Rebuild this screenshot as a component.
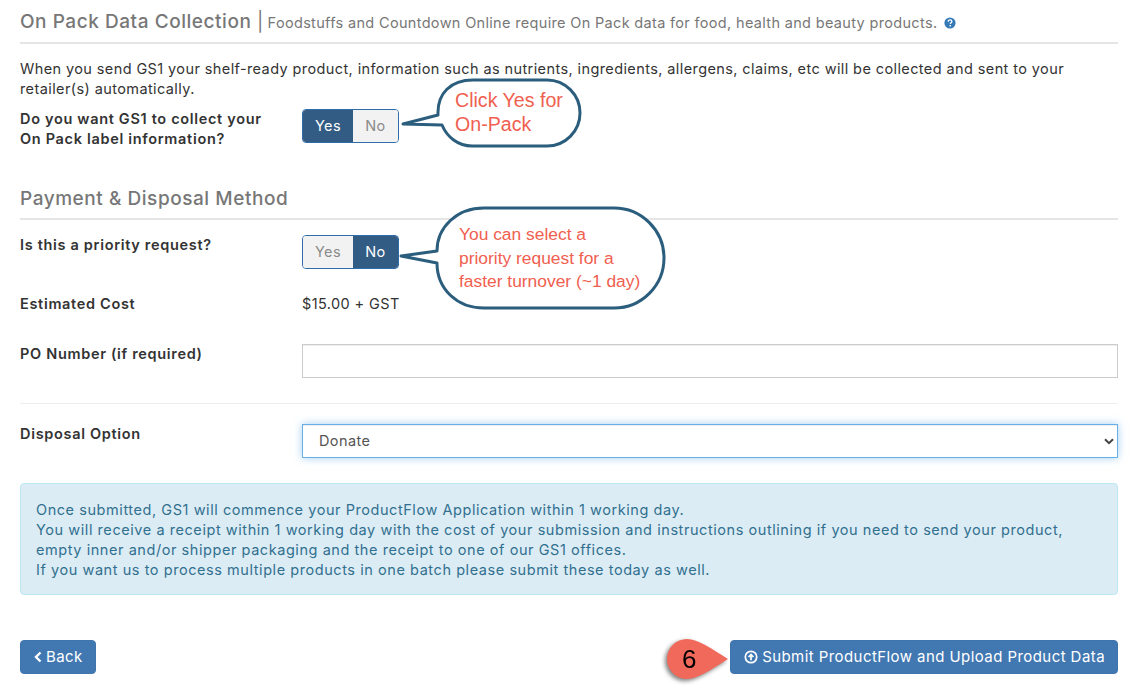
<script>
	let onPack = 'yes';
	let priority = 'no';
</script>

<div class="page">
	<h4 class="heading first">
		On Pack Data Collection <span class="sep">|</span>
		<small>Foodstuffs and Countdown Online require On Pack data for food, health and beauty products.</small>
		<svg class="help" viewBox="0 0 12 12" width="12" height="12">
			<circle cx="6" cy="6" r="5.6" fill="#337ab7" />
			<path d="M4.2 4.7c0-1.1.8-1.8 1.9-1.8s1.8.7 1.8 1.6c0 1.3-1.6 1.3-1.6 2.5" fill="none" stroke="#fff" stroke-width="1.3" />
			<rect x="5.5" y="8" width="1.5" height="1.4" fill="#fff" />
		</svg>
	</h4>

	<p class="intro">
		When you send GS1 your shelf-ready product, information such as nutrients, ingredients, allergens, claims, etc will be collected and sent to your retailer(s) automatically.
	</p>

	<div class="row onpack">
		<label class="label" for="onpack">Do you want GS1 to collect your<br />On Pack label information?</label>
		<div class="toggle" id="onpack">
			<button class="yes" class:on={onPack === 'yes'}>Yes</button>
			<button class="no" class:on={onPack === 'no'}>No</button>
		</div>
	</div>

	<h4 class="heading second">Payment &amp; Disposal Method</h4>

	<div class="row priority">
		<label class="label" for="priority">Is this a priority request?</label>
		<div class="toggle" id="priority">
			<button class="yes" class:on={priority === 'yes'}>Yes</button>
			<button class="no" class:on={priority === 'no'}>No</button>
		</div>
	</div>

	<div class="row cost">
		<span class="label">Estimated Cost</span>
		<span class="value">$15.00 + GST</span>
	</div>

	<div class="row po">
		<label class="label" for="po">PO Number (if required)</label>
		<input id="po" type="text" />
	</div>

	<hr />

	<div class="row disposal">
		<label class="label" for="disposal">Disposal Option</label>
		<div class="select-wrap">
			<select id="disposal">
				<option>Donate</option>
			</select>
			<svg class="chevron" viewBox="0 0 10 7" width="10" height="7">
				<path d="M1 1.2l4 4 4-4" fill="none" stroke="#444" stroke-width="2" />
			</svg>
		</div>
	</div>

	<div class="alert">
		Once submitted, GS1 will commence your ProductFlow Application within 1 working day.<br />
		You will receive a receipt within 1 working day with the cost of your submission and instructions outlining if you need to send your product, empty inner and/or shipper packaging and the receipt to one of our GS1 offices.<br />
		If you want us to process multiple products in one batch please submit these today as well.
	</div>

	<div class="actions">
		<button class="btn">
			<svg viewBox="0 0 8 12" width="8" height="12">
				<path d="M6.5 1.5L2 6l4.5 4.5" fill="none" stroke="#fff" stroke-width="2.4" />
			</svg>
			Back
		</button>
		<button class="btn">
			<svg viewBox="0 0 14 14" width="14" height="14">
				<circle cx="7" cy="7" r="5.7" fill="none" stroke="#fff" stroke-width="1.7" />
				<path d="M7 10.2V4.6M4.6 7L7 4.4 9.4 7" fill="none" stroke="#fff" stroke-width="1.7" />
			</svg>
			Submit ProductFlow and Upload Product Data
		</button>
	</div>

	<!-- annotations drawn on top of the screenshot -->
	<div class="callout one">
		<svg viewBox="0 0 184 72" width="184" height="72">
			<path d="M37 38C36 16 50 3 72 3H146a33 33 0 0 1 0 66H71C57 69 46 60 41 48L2 47Z" fill="#fff" stroke="#2b5d7d" stroke-width="3" stroke-linejoin="round" />
		</svg>
		<span>Click Yes for<br />On-Pack</span>
	</div>

	<div class="callout two">
		<svg viewBox="0 0 268 106" width="268" height="106">
			<path d="M85 3H215a50 50 0 0 1 0 100H85C58 103 38 84 38 58L2 51 38 46C38 22 58 3 85 3Z" fill="#fff" stroke="#2b5d7d" stroke-width="3" stroke-linejoin="round" />
		</svg>
		<span>You can select a<br />priority request for a<br />faster turnover (~1 day)</span>
	</div>

	<div class="marker">
		<svg viewBox="0 0 72 48" width="72" height="48">
			<path d="M25 2C36 2 50 12 66 22 50 32 36 42 25 42A20 20 0 0 1 25 2Z" fill="#f0695a" />
		</svg>
		<span>6</span>
	</div>
</div>

<style>
	:global(body) {
		margin: 0;
		background: #fff;
	}

	.page {
		position: relative;
		height: 690px;
		overflow: hidden;
		padding: 0 17px 0 20px;
		box-sizing: border-box;
		font-family: Inter, sans-serif;
		font-size: 14.5px;
		letter-spacing: 0.4px;
		line-height: 20px;
		color: #333;
	}

	.heading {
		margin: 0;
		font-size: 19px;
		font-weight: 500;
		letter-spacing: 0.55px;
		line-height: 22px;
		color: #777;
		border-bottom: 2px solid #e5e5e5;
	}

	.heading.first {
		padding: 11px 0 8px;
	}

	.heading.second {
		margin-top: 39px;
		padding-bottom: 8px;
	}

	.sep {
		font-weight: 400;
	}

	small {
		margin-left: -2px;
		font-size: 14.5px;
		font-weight: 400;
		letter-spacing: 0.33px;
		color: #777;
	}

	.help {
		margin-left: 1px;
		vertical-align: -1px;
	}

	.intro {
		margin: 15px 0 0;
	}

	.row {
		display: grid;
		grid-template-columns: 282px 1fr;
		align-items: start;
	}

	.label {
		font-weight: 600;
		letter-spacing: 0.68px;
	}

	.onpack {
		margin-top: 10px;
	}

	.priority {
		margin-top: 15px;
	}

	.cost {
		margin-top: 25px;
	}

	.po {
		margin-top: 30px;
	}

	.disposal {
		margin-top: 20px;
	}

	.toggle {
		display: flex;
		width: 97px;
		height: 34px;
		box-sizing: border-box;
		border: 1px solid #2f6da8;
		border-radius: 4px;
		overflow: hidden;
	}

	.toggle button {
		border: 0;
		padding: 0;
		font: inherit;
		letter-spacing: inherit;
		background: #f2f2f2;
		color: #8a8a8a;
	}

	.toggle button.on {
		background: #335c85;
		color: #fff;
	}

	.toggle .yes {
		width: 50px;
	}

	.toggle .no {
		flex: 1;
	}

	input {
		height: 34px;
		width: 100%;
		box-sizing: border-box;
		border: 1px solid #ccc;
		background: #fff;
		outline: none;
		box-shadow: inset 0 1px 1px rgba(0, 0, 0, 0.075);
	}

	hr {
		margin: 25px 0 0;
		border: 0;
		border-top: 1px solid #eee;
	}

	.select-wrap {
		position: relative;
	}

	select {
		display: block;
		width: 100%;
		height: 34px;
		box-sizing: border-box;
		padding: 0 16px;
		appearance: none;
		border: 1px solid #66afe9;
		border-radius: 0;
		background: #fff;
		font: inherit;
		letter-spacing: inherit;
		color: #555;
		box-shadow:
			inset 0 1px 1px rgba(0, 0, 0, 0.075),
			0 0 8px rgba(102, 175, 233, 0.6);
	}

	.chevron {
		position: absolute;
		right: 4px;
		top: 14px;
	}

	.alert {
		margin-top: 25px;
		padding: 16px 15px 14px;
		border: 1px solid #bce8f1;
		border-radius: 4px;
		background: #dcecf5;
		color: #31708f;
		letter-spacing: 0.56px;
	}

	.actions {
		display: flex;
		justify-content: space-between;
		margin-top: 45px;
	}

	.btn {
		display: flex;
		align-items: center;
		gap: 4px;
		height: 34px;
		padding: 0 12px 0 13px;
		border: 1px solid #3f74ad;
		border-radius: 4px;
		background: #4278b2;
		color: #fff;
		font: inherit;
		font-size: 15px;
		letter-spacing: 0.43px;
	}

	.callout,
	.marker {
		position: absolute;
	}

	.callout svg,
	.marker svg {
		display: block;
	}

	.callout span {
		position: absolute;
		font-family: 'Liberation Sans', sans-serif;
		letter-spacing: 0;
		color: #f0604f;
		white-space: nowrap;
	}

	.one {
		left: 401px;
		top: 77px;
	}

	.one span {
		left: 54px;
		top: 11px;
		font-size: 19.6px;
		line-height: 24px;
	}

	.two {
		left: 399px;
		top: 205px;
	}

	.two span {
		left: 60px;
		top: 18px;
		font-size: 17.4px;
		line-height: 23.5px;
	}

	.marker {
		left: 662px;
		top: 637px;
		filter: drop-shadow(-2px 2px 2px rgba(0, 0, 0, 0.5));
	}

	.marker span {
		position: absolute;
		left: 20px;
		top: 8px;
		font-family: 'Liberation Sans', sans-serif;
		font-size: 26px;
		line-height: 28px;
		letter-spacing: 0;
		color: #000;
	}
</style>
